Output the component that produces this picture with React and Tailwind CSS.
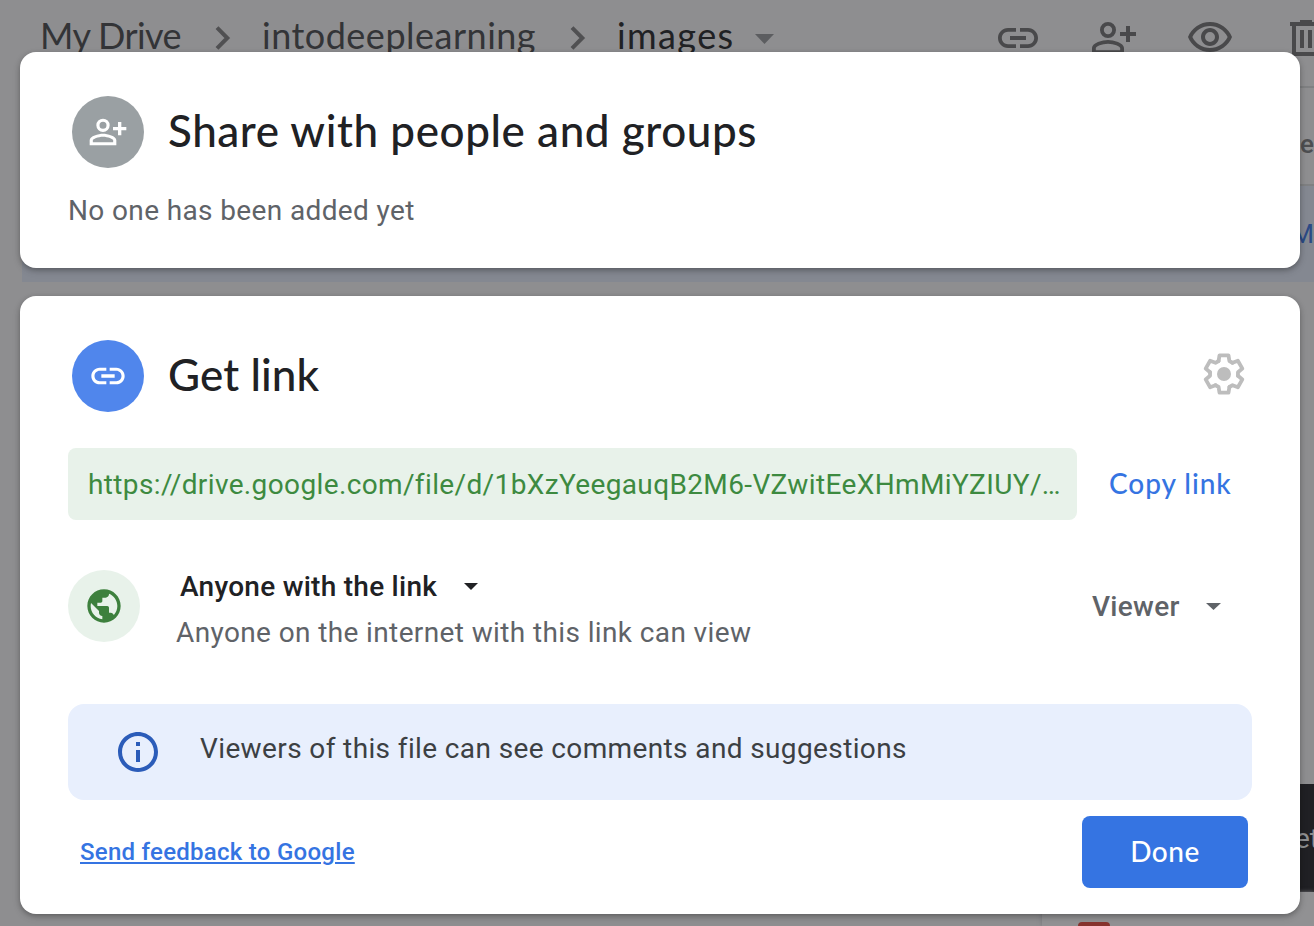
const PATHS = {
  link: 'M3.9 12c0-1.71 1.39-3.1 3.1-3.1h4V7H7c-2.76 0-5 2.24-5 5s2.24 5 5 5h4v-1.9H7c-1.71 0-3.1-1.39-3.1-3.1zM8 13h8v-2H8v2zm9-6h-4v1.9h4c1.71 0 3.1 1.39 3.1 3.1s-1.39 3.1-3.1 3.1h-4V17h4c2.76 0 5-2.24 5-5s-2.24-5-5-5z',
  personAdd:
    'M9 4a4 4 0 100 8 4 4 0 000-8zm0 1.9a2.1 2.1 0 110 4.2 2.1 2.1 0 010-4.2zM18 6h2v3h3v2h-3v3h-2v-3h-3V9h3zM9 13c-2.67 0-8 1.34-8 4v3h16v-3c0-2.66-5.33-4-8-4zm0 1.9c2.97 0 6.1 1.46 6.1 2.1v1.1H2.9V17c0-.64 3.13-2.1 6.1-2.1z',
  eye: 'M12 6c3.79 0 7.17 2.13 8.82 5.5C19.17 14.87 15.79 17 12 17s-7.17-2.13-8.82-5.5C4.83 8.13 8.21 6 12 6m0-2C7 4 2.73 7.11 1 11.5 2.73 15.89 7 19 12 19s9.27-3.11 11-7.5C21.27 7.11 17 4 12 4zm0 5a2.5 2.5 0 010 5 2.5 2.5 0 010-5m0-2c-2.48 0-4.5 2.02-4.5 4.5S9.52 16 12 16s4.5-2.02 4.5-4.5S14.48 7 12 7z',
  trash: 'M15 4V3H9v1H4v2h1v15h14V6h1V4h-5zm2 15H7V6h10v13zM9 8h2v9H9zm4 0h2v9h-2z',
  globe:
    'M12 2C6.48 2 2 6.48 2 12s4.48 10 10 10 10-4.48 10-10S17.52 2 12 2zm-1 17.93c-3.95-.49-7-3.85-7-7.93 0-.62.08-1.21.21-1.79L9 15v1c0 1.1.9 2 2 2v1.93zm6.9-2.54c-.26-.81-1-1.39-1.9-1.39h-1v-3c0-.55-.45-1-1-1H8v-2h2c.55 0 1-.45 1-1V7h2c1.1 0 2-.9 2-2v-.41c2.93 1.19 5 4.06 5 7.41 0 2.08-.8 3.97-2.1 5.39z',
  info: 'M11 7h2v2h-2zm0 4h2v6h-2zm1-9C6.48 2 2 6.48 2 12s4.48 10 10 10 10-4.48 10-10S17.52 2 12 2zm0 18c-4.41 0-8-3.59-8-8s3.59-8 8-8 8 3.59 8 8-3.59 8-8 8z',
};

function Icon({ name, className }) {
  return (
    <svg viewBox="0 0 24 24" fill="currentColor" fillRule="evenodd" className={`shrink-0 ${className}`}>
      <path d={PATHS[name]} />
    </svg>
  );
}

function Gear({ className }) {
  return (
    <svg viewBox="-12 -12 24 24" fill="none" className={`shrink-0 ${className}`}>
      {[0, 60, 120, 180, 240, 300].map((angle) => (
        <path
          key={angle}
          d="M-2.7-6.5-2.25-9.3H2.25L2.7-6.5 4.28-5.59"
          transform={`rotate(${angle})`}
          stroke="currentColor"
          strokeWidth="1.9"
          strokeLinejoin="round"
          strokeLinecap="round"
        />
      ))}
      <circle r="3.5" fill="currentColor" />
    </svg>
  );
}

function Chevron({ className }) {
  return (
    <svg viewBox="0 0 16 24" className={`h-6 w-4 shrink-0 text-[#505052] ${className}`}>
      <path d="M2 1.7 12.3 12 2 22.3" fill="none" stroke="currentColor" strokeWidth="4" />
    </svg>
  );
}

function Caret({ className }) {
  return (
    <svg viewBox="0 0 14 7" preserveAspectRatio="none" fill="currentColor" className={`shrink-0 ${className}`}>
      <path d="M0 0h14L7 7z" />
    </svg>
  );
}

const sans = "font-['Lato','Open_Sans',sans-serif]";

function DrivePage() {
  return (
    <div className="flex h-full flex-col">
      <header className={`ml-[22px] flex h-[88px] shrink-0 items-start border-b-2 border-[#7f8082] ${sans} text-[36px] leading-[44px] text-[#333437] whitespace-nowrap`}>
        <div className="flex w-[972px] shrink-0 pt-[13px]">
          <span className="ml-[18px] w-[175px] shrink-0 tracking-[-0.6px]">My Drive</span>
          <Chevron className="mt-[13px]" />
          <span className="ml-[31px] w-[308px] shrink-0 tracking-[0.5px]">intodeeplearning</span>
          <Chevron className="mt-[13px]" />
          <span className="ml-[31px] w-[138px] shrink-0 tracking-[1.4px] text-[#202124]">images</span>
          <Caret className="mt-[21px] h-[10px] w-[19px] text-[#5c5d60]" />
        </div>
        <div className="flex shrink-0 gap-12 pt-[14px] text-[#49494b]">
          <Icon name="link" className="size-12" />
          <Icon name="personAdd" className="size-12" />
          <Icon name="eye" className="size-12" />
          <Icon name="trash" className="size-12" />
        </div>
      </header>
      <div className="ml-[22px] flex h-[98px] shrink-0 items-center justify-end border-b-2 border-[#7f8082] pt-4 font-['Roboto',sans-serif] text-[26px] font-medium text-[#4d4e51]">
        <span>e</span>
      </div>
      <div className="ml-[22px] flex h-24 shrink-0 items-center justify-end bg-[#848891] font-['Roboto',sans-serif] text-[26px] text-[#2b4a85]">
        <span>M</span>
      </div>
      <div className="mt-[502px] ml-auto flex h-[108px] w-8 shrink-0 items-center bg-[#202024] pt-0.5 pl-[13px] font-['Roboto',sans-serif] text-[28px] text-[#8e8f91]">
        <span>et</span>
      </div>
      <div className="ml-auto flex h-[34px] w-[272px] shrink-0 items-end bg-[#919193] pl-9 shadow-[0_0_4px_#77777a]">
        <div className="h-1 w-8 rounded-t bg-[#87332e]" />
      </div>
    </div>
  );
}

function Card({ className, children }) {
  return (
    <section className={`shrink-0 rounded-2xl bg-white shadow-[0_2px_5px_rgba(0,0,0,0.24),0_3px_8px_rgba(0,0,0,0.12)] ${className}`}>
      {children}
    </section>
  );
}

function ShareCard() {
  return (
    <Card className="h-[216px] px-12 pt-11">
      <div className="flex h-[72px] items-center pl-1">
        <div className="flex size-[72px] items-center justify-center rounded-full bg-[#9aa0a3] text-white">
          <Icon name="personAdd" className="size-10" />
        </div>
        <h1 className={`ml-6 pb-1 ${sans} text-[44px] leading-[56px] font-medium tracking-[0.57px] text-[#202124] whitespace-nowrap`}>
          Share with people and groups
        </h1>
      </div>
      <p className="mt-[23px] text-[28px] leading-10 tracking-[0.37px] text-[#5f6368]">No one has been added yet</p>
    </Card>
  );
}

function LinkCard() {
  return (
    <Card className="h-[618px] px-12 pt-11">
      <div className="flex h-[72px] items-center pl-1">
        <div className="flex size-[72px] items-center justify-center rounded-full bg-[#5086ec] text-white">
          <Icon name="link" className="size-10" />
        </div>
        <h1 className={`ml-6 flex-1 pb-1 ${sans} text-[44px] leading-[56px] font-medium tracking-[0.1px] text-[#202124]`}>Get link</h1>
        <Gear className="mr-1 mb-1 size-12 text-[#bdbdbd]" />
      </div>
      <div className="mt-9 flex h-[72px] items-center">
        <div className="flex h-full w-[1009px] items-center rounded-lg bg-[#e8f2ea] pt-0.5 pl-5 text-[28px] tracking-[0.37px] text-[#3d8a40] whitespace-nowrap">
          https://drive.google.com/file/d/1bXzYeegauqB2M6-VZwitEeXHmMiYZIUY/…
        </div>
        <a className={`ml-8 pb-0.5 ${sans} text-[28px] font-medium tracking-[0.95px] text-[#3574e2] whitespace-nowrap`}>Copy link</a>
      </div>
      <div className="mt-[50px] flex h-[84px] items-start">
        <div className="flex size-[72px] items-center justify-center rounded-full bg-[#e8f2ea] text-[#3d803d]">
          <Icon name="globe" className="size-10" />
        </div>
        <div className="ml-9 flex-1">
          <div className="ml-1 flex h-[33px] items-center text-[28px] font-medium tracking-[0.26px] text-[#202124]">
            <span className="w-[284px] pt-px">Anyone with the link</span>
            <Caret className="h-[7px] w-[14px]" />
          </div>
          <p className="mt-3 text-[28px] leading-9 tracking-[0.38px] text-[#5f6368]">Anyone on the internet with this link can view</p>
        </div>
        <div className="mr-[31px] flex h-[72px] items-center text-[28px] font-medium tracking-[0.3px] text-[#5f6368]">
          <span className="w-[114px] pt-0.5">Viewer</span>
          <Caret className="h-[7px] w-[15px]" />
        </div>
      </div>
      <div className="mt-[50px] flex h-24 items-center rounded-2xl bg-[#e8effd] pl-[46px]">
        <Icon name="info" className="size-12 text-[#2b5cb9]" />
        <p className="ml-[38px] pb-1.5 text-[28px] tracking-[0.38px] text-[#3c4043]">Viewers of this file can see comments and suggestions</p>
      </div>
      <div className="mt-4 mr-1 ml-3 flex h-[72px] items-center justify-between">
        <a className="text-2xl font-medium tracking-[0.27px] text-[#3574e2] underline decoration-2 underline-offset-2">Send feedback to Google</a>
        <button className={`h-full w-[166px] rounded-lg bg-[#3574e2] pb-0.5 ${sans} text-[28px] font-medium tracking-[0.5px] text-white`}>Done</button>
      </div>
    </Card>
  );
}

export default function App() {
  return (
    <div className="relative h-[926px] w-[1314px] overflow-hidden bg-[#8e8e90]">
      <DrivePage />
      <div className="absolute inset-0 flex flex-col gap-7 pt-[52px] pr-[14px] pl-5 font-['Roboto',sans-serif]">
        <ShareCard />
        <LinkCard />
      </div>
    </div>
  );
}
